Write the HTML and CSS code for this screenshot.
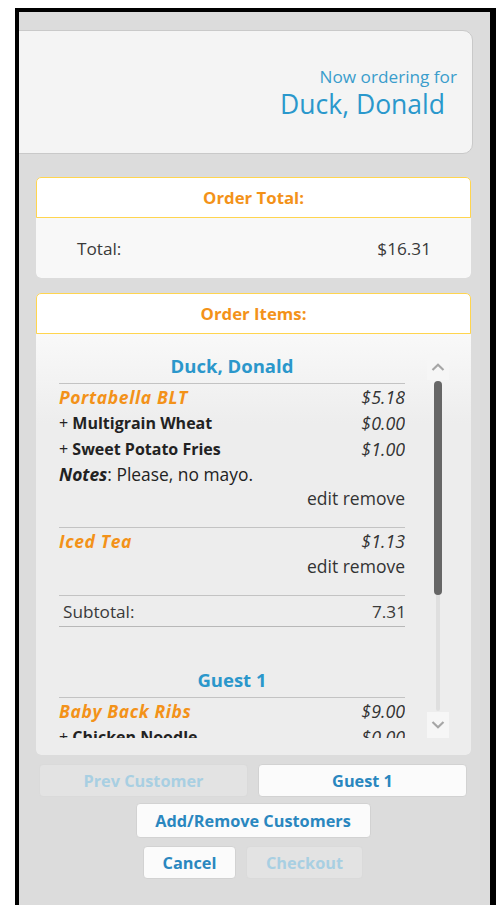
FILE: index.html
```html
<!DOCTYPE html>
<html lang="en">
<head>
<meta charset="utf-8">
<title>Order</title>
<link rel="stylesheet" href="styles.css">
</head>
<body>
<div class="frame">
  <div class="customer-card">
    <div class="now-label">Now ordering for</div>
    <div class="now-name">Duck, Donald</div>
  </div>

  <section class="panel total-panel">
    <h2 class="panel-head">Order Total:</h2>
    <div class="panel-body total-body">
      <span>Total:</span>
      <span>$16.31</span>
    </div>
  </section>

  <section class="panel items-panel">
    <h2 class="panel-head">Order Items:</h2>
    <div class="panel-body items-body">
      <div class="scroll-view">
        <div class="scroll-content">
          <div class="customer">
            <h3 class="customer-name">Duck, Donald</h3>
            <div class="item">
              <div class="row item-row"><span class="item-name">Portabella BLT</span><span class="price">$5.18</span></div>
              <div class="row mod-row"><span><span class="plus">+</span> <b>Multigrain Wheat</b></span><span class="price">$0.00</span></div>
              <div class="row mod-row"><span><span class="plus">+</span> <b>Sweet Potato Fries</b></span><span class="price">$1.00</span></div>
              <div class="row notes-row"><span><b><i>Notes</i></b>: Please, no mayo.</span></div>
              <div class="actions">edit remove</div>
            </div>
            <div class="item">
              <div class="row item-row"><span class="item-name">Iced Tea</span><span class="price">$1.13</span></div>
              <div class="actions">edit remove</div>
            </div>
            <div class="row subtotal"><span>Subtotal:</span><span>7.31</span></div>
          </div>
          <div class="customer">
            <h3 class="customer-name">Guest 1</h3>
            <div class="item">
              <div class="row item-row"><span class="item-name">Baby Back Ribs</span><span class="price">$9.00</span></div>
              <div class="row mod-row"><span><span class="plus">+</span> <b>Chicken Noodle</b></span><span class="price">$0.00</span></div>
              <div class="actions">edit remove</div>
            </div>
          </div>
        </div>
        <div class="scrollbar">
          <div class="sb-btn">
            <svg width="14" height="8" viewBox="0 0 14 8"><polyline points="1.5,7 7,1.8 12.5,7" fill="none" stroke="#a6a6a6" stroke-width="2.2"/></svg>
          </div>
          <div class="sb-track">
            <div class="sb-thumb"></div>
          </div>
          <div class="sb-btn">
            <svg width="14" height="8" viewBox="0 0 14 8"><polyline points="1.5,1 7,6.2 12.5,1" fill="none" stroke="#a6a6a6" stroke-width="2.2"/></svg>
          </div>
        </div>
      </div>
    </div>
  </section>

  <div class="btn-row">
    <button class="btn btn-wide" disabled>Prev Customer</button>
    <button class="btn btn-wide">Guest 1</button>
  </div>
  <div class="btn-row center">
    <button class="btn btn-customers">Add/Remove Customers</button>
  </div>
  <div class="btn-row center">
    <button class="btn btn-cancel">Cancel</button>
    <button class="btn btn-checkout" disabled>Checkout</button>
  </div>
</div>
</body>
</html>
```
FILE: styles.css
```css
html, body {
  margin: 0;
  padding: 0;
  background: #ffffff;
  height: 905px;
  overflow: hidden;
}

body {
  font-family: "Open Sans", "DejaVu Sans", sans-serif;
  color: #333333;
}

.frame {
  margin: 8px 0 0 15px;
  border: 4px solid #000000;
  border-right-width: 6px;
  border-bottom: none;
  background: #dcdcdc;
  height: 893px;
  overflow: hidden;
  display: flex;
  flex-direction: column;
}

/* customer banner */
.customer-card {
  margin: 18px 17px 0 -12px;
  height: 122px;
  background: #f4f4f4;
  border: 1px solid #c9c9c9;
  border-radius: 0 10px 10px 0;
  display: flex;
  flex-direction: column;
  align-items: flex-end;
}

.now-label {
  margin-top: 35px;
  padding-right: 15px;
  font-size: 17.2px;
  line-height: 22px;
  color: #3a9dcc;
}

.now-name {
  padding-right: 27px;
  font-size: 26.5px;
  line-height: 32px;
  color: #2a98cc;
}

/* panels */
.panel {
  margin: 0 19px 0 17px;
  border-radius: 5px;
  overflow: hidden;
}

.total-panel {
  margin-top: 23px;
}

.items-panel {
  margin-top: 15px;
}

.panel-head {
  margin: 0;
  height: 39px;
  background: #ffffff;
  border: 1px solid #ffd54f;
  border-radius: 5px 5px 0 0;
  text-align: center;
  font-size: 16.8px;
  line-height: 39px;
  font-weight: 700;
  color: #f39219;
}

.total-body {
  height: 60px;
  background: #f8f8f8;
  display: flex;
  justify-content: space-between;
  align-items: center;
  padding: 0 40px 0 41px;
  font-size: 17.2px;
  color: #3a3a3a;
  border-radius: 0 0 5px 5px;
}

.items-body {
  background: linear-gradient(#f9f9f9 0, #ededed 90px, #ededed 100%);
  padding: 16px 22px 17px 23px;
  border-radius: 0 0 5px 5px;
}

.scroll-view {
  display: flex;
  height: 388px;
  gap: 22px;
}

.scroll-content {
  flex: 1;
  overflow: hidden;
}

.customer + .customer {
  margin-top: 37px;
}

.customer-name {
  margin: 0;
  height: 33px;
  line-height: 31px;
  border-bottom: 1px solid #c3c3c3;
  text-align: center;
  font-size: 18.5px;
  font-weight: 700;
  color: #2b97cb;
}

.item {
  border-bottom: 1px solid #c3c3c3;
  padding-bottom: 17px;
}

.row {
  display: flex;
  justify-content: space-between;
  align-items: center;
  height: 26px;
  font-size: 17.4px;
  color: #222222;
}

.item-name {
  font-weight: 700;
  font-style: italic;
  font-size: 17.5px;
  letter-spacing: 0.6px;
  color: #f39219;
}

.price {
  font-style: italic;
  font-size: 17.8px;
  color: #333333;
}

.mod-row {
  font-size: 16px;
}

.mod-row .price {
  font-size: 17.8px;
}

.mod-row b {
  font-weight: 700;
}

.plus {
  font-weight: 400;
}

.notes-row {
  height: 24px;
}

.actions {
  text-align: right;
  font-size: 17.5px;
  line-height: 24px;
  color: #333333;
}

.subtotal {
  height: 30px;
  padding: 0 2px 0 4px;
  margin-right: -3px;
  border-bottom: 1px solid #b8b8b8;
  font-size: 17.2px;
  color: #3a3a3a;
}

/* scrollbar */
.scrollbar {
  width: 22px;
  display: flex;
  flex-direction: column;
  align-items: center;
  padding-top: 4px;
}

.sb-btn {
  width: 22px;
  height: 26px;
  background: #f6f6f6;
  display: flex;
  align-items: center;
  justify-content: center;
}

.sb-track {
  flex: 1;
  width: 4px;
  background: #dfdfdf;
  border-radius: 2px;
  margin: 1px 0;
  position: relative;
}

.sb-thumb {
  position: absolute;
  left: -2px;
  top: 0;
  width: 8px;
  height: 214px;
  background: #666666;
  border-radius: 4px;
}

/* buttons */
.btn-row {
  display: flex;
  gap: 10px;
  margin: 9px 23px 0 20px;
}

.btn-row.center {
  justify-content: center;
  margin-top: 6px;
}

.btn-row.center:last-child {
  margin-top: 8px;
}

.btn {
  font-family: inherit;
  font-weight: 700;
  font-size: 16.3px;
  line-height: 20px;
  color: #2a87bf;
  background: #fbfbfb;
  border: 1px solid #d2d2d2;
  border-radius: 4px;
  padding: 0;
  height: 33px;
}

.btn[disabled] {
  background: #e3e3e3;
  border-color: #dadada;
  color: #a8cfe2;
}

.btn-wide {
  flex: 1;
}

.btn-customers {
  width: 235px;
  height: 35px;
}

.btn-cancel {
  width: 93px;
}

.btn-checkout {
  width: 117px;
}
```
